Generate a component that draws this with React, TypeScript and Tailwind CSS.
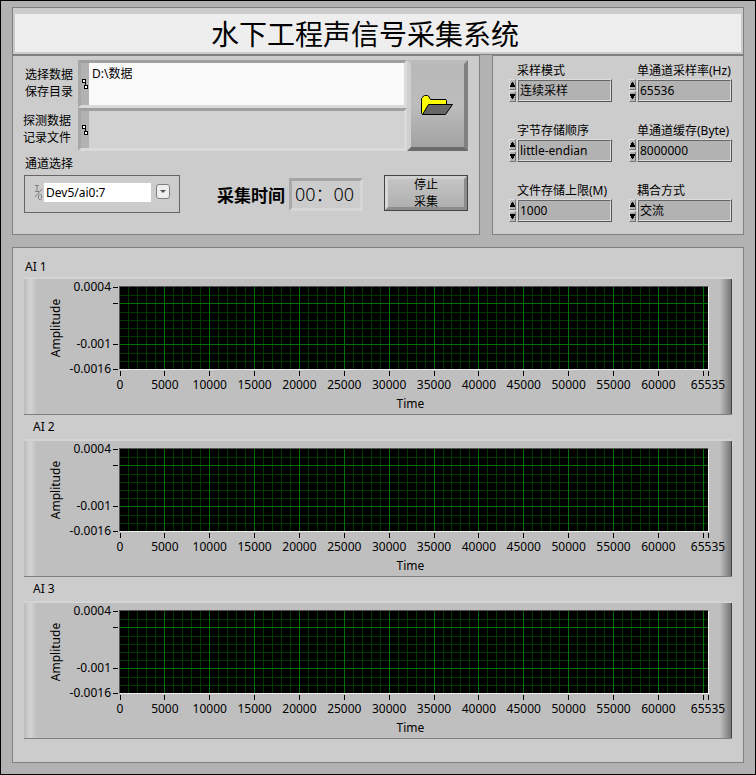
import React, { useId } from "react";

const PANEL = "border border-[#808080] bg-[#cccccc]";

function PathGlyph() {
  return (
    <svg width="8" height="12" viewBox="0 0 8 12" shapeRendering="crispEdges" aria-hidden="true">
      <path d="M1.5 1.5h3v3h-3z M3.5 7.5h3v3h-3z" fill="#fff" stroke="#000" />
      <path d="M4.500 4v4" stroke="#000" />
    </svg>
  );
}

function PathField(props: {
  lines: [string, string];
  value: string;
  labelClass: string;
  rowClass: string;
  fieldClass: string;
}) {
  const id = useId();
  return (
    <div className={"flex " + props.rowClass}>
      <label htmlFor={id} className={"w-[65px] shrink-0 leading-[17px] " + props.labelClass}>
        {props.lines[0]}
        <br />
        {props.lines[1]}
      </label>
      <div className="flex min-w-0 flex-1 border-[3px] border-t-[#a0a0a0] border-r-[#dadada] border-b-[#dadada] border-l-[#a8a8a8]">
        <div className="flex w-2 shrink-0 items-center bg-[#b2b2b2]">
          <PathGlyph />
        </div>
        <textarea
          id={id}
          defaultValue={props.value}
          className={"block min-w-0 flex-1 resize-none overflow-hidden px-[3px] pt-px leading-5 outline-none " + props.fieldClass}
        />
      </div>
    </div>
  );
}

function FolderIcon() {
  return (
    <svg width="33" height="21" viewBox="0 0 33 21" aria-hidden="true">
      <path d="M.5 18.5V3.5l1-1 1-1.5 1-.5h3l1 .5 1 2 1 1.500h15.500l.5 1V10H8L2 19.500z" fill="#ffff00" stroke="#000" />
      <path d="M7.500 9.500h24l-7 10h-23z" fill="#666" stroke="#000" />
    </svg>
  );
}

type Setting = { label: string; value: string; kind: "select" | "number" };

const SETTINGS: Setting[] = [
  { label: "采样模式", value: "连续采样", kind: "select" },
  { label: "单通道采样率(Hz)", value: "65536", kind: "number" },
  { label: "字节存储顺序", value: "little-endian", kind: "select" },
  { label: "单通道缓存(Byte)", value: "8000000", kind: "number" },
  { label: "文件存储上限(M)", value: "1000", kind: "number" },
  { label: "耦合方式", value: "交流", kind: "select" },
];

const STEP =
  "flex h-[11px] w-full items-center justify-center border border-t-[#dddddd] border-r-[#777777] border-b-[#777777] border-l-[#dddddd] bg-[#b2b2b2]";

function SettingField({ label, value, kind }: Setting) {
  const id = useId();
  const field =
    "block h-full w-full min-w-0 appearance-none border border-t-[#666666] border-r-[#dddddd] border-b-[#dddddd] border-l-[#666666] bg-[#b2b2b2] px-px leading-[18px] outline-none";
  return (
    <div>
      <label htmlFor={id} className="block h-[17px] pl-2 leading-[18px] whitespace-nowrap">
        {label}
      </label>
      <div className="flex h-[23px]">
        <div className="mr-px flex w-[7px] shrink-0 flex-col justify-between">
          <button type="button" className={STEP} aria-label={label + " +"}>
            <svg width="5" height="5" viewBox="0 0 5 5" shapeRendering="crispEdges" className="shrink-0" aria-hidden="true">
              <path d="M2 0h1v1h1v2h1v2H0V3h1V1h1z" />
            </svg>
          </button>
          <button type="button" className={STEP} aria-label={label + " -"}>
            <svg width="5" height="5" viewBox="0 0 5 5" shapeRendering="crispEdges" className="shrink-0" aria-hidden="true">
              <path d="M0 0h5v2H4v2H3v1H2V4H1V2H0z" />
            </svg>
          </button>
        </div>
        <div className="min-w-0 flex-1 border border-t-[#dddddd] border-r-[#555555] border-b-[#555555] border-l-[#dddddd]">
          {kind === "select" ? (
            <select id={id} className={field}>
              <option>{value}</option>
            </select>
          ) : (
            <input id={id} type="text" inputMode="numeric" defaultValue={value} className={field} />
          )}
        </div>
      </div>
    </div>
  );
}

const X_MAX = 65535;
const Y_MAX = 4;
const Y_SPAN = 20;
const PLOT_H = 82;
const X_LINES = Array.from({ length: 65 }, (_, i) => (i + 1) * 1000);
const Y_LINES = [2, 0, -2, -4, -6, -8, -10, -12, -14];
const X_TICKS = [0, 5000, 10000, 15000, 20000, 25000, 30000, 35000, 40000, 45000, 50000, 55000, 60000, 65000, 65535];
const Y_TICKS: { at: number; text: string }[] = [
  { at: 4, text: "0.0004" },
  { at: 0, text: "" },
  { at: -10, text: "-0.001" },
  { at: -16, text: "-0.0016" },
];

const xPos = (v: number) => (v / X_MAX) * 100 + "%";
const yPos = (v: number) => Math.round(((Y_MAX - v) / Y_SPAN) * PLOT_H) + 0.5;

function Plot() {
  const minorX = X_LINES.filter((v) => v % 5000 !== 0);
  const majorX = X_LINES.filter((v) => v % 5000 === 0);
  const minorY = Y_LINES.filter((v) => v % 10 !== 0);
  const majorY = Y_LINES.filter((v) => v % 10 === 0);
  const vLine = (v: number) => <line key={"x" + v} x1={xPos(v)} x2={xPos(v)} y1="0" y2="82" />;
  const hLine = (v: number) => <line key={"y" + v} x1="0" x2="100%" y1={yPos(v)} y2={yPos(v)} />;
  return (
    <svg width="100%" height="82" className="block overflow-visible text-xs" fill="#000">
      <rect width="100%" height="82" />
      <g shapeRendering="crispEdges">
        <g stroke="#003800">
          {minorX.map(vLine)}
          {minorY.map(hLine)}
        </g>
        <g stroke="#007000">
          {majorX.map(vLine)}
          {majorY.map(hLine)}
        </g>
        <g stroke="#000">
          {X_TICKS.map((v) => (
            <line key={v} x1={xPos(v)} x2={xPos(v)} y1="84" y2="89" />
          ))}
          {Y_TICKS.map((t) => (
            <line key={t.at} x1="-7" x2="-2" y1={yPos(t.at)} y2={yPos(t.at)} />
          ))}
        </g>
      </g>
      {X_TICKS.filter((v) => v !== 65000).map((v) => (
        <text key={v} x={xPos(v)} y="102" textAnchor="middle">
          {v}
        </text>
      ))}
      {Y_TICKS.map((t) => (
        <text key={t.at} x="-9" y={Math.floor(yPos(t.at)) + 4} textAnchor="end">
          {t.text}
        </text>
      ))}
      <text x="49.4%" y="121" textAnchor="middle">
        Time
      </text>
      <text transform="translate(-60 41) rotate(-90)" textAnchor="middle">
        Amplitude
      </text>
    </svg>
  );
}

function Chart({ name, headClass }: { name: string; headClass: string }) {
  return (
    <section>
      <h2 className={"flex h-6 leading-5 " + headClass}>{name}</h2>
      <div className="flex h-[138px] border-t-2 border-b border-t-[#d4d4d4] border-b-[#808080] bg-[#bfbfbf]">
        <div className="w-3 shrink-0 bg-linear-to-r from-[#bcbcbc] via-[#d4d4d4] to-[#c2c2c2]" />
        <div className="z-10 min-w-0 flex-1 pt-[7px] pr-[11px] pl-[83px]">
          <div className="border border-t-[#555555] border-r-[#eeeeee] border-b-[#eeeeee] border-l-[#555555]">
            <Plot />
          </div>
        </div>
        <div className="w-3 shrink-0 border-r border-[#444444] bg-linear-to-r from-[#bfbfbf] to-[#777777]" />
      </div>
    </section>
  );
}

export default function App() {
  return (
    <main className="min-h-screen border border-black bg-[#b2b2b2] px-[11px] pt-[6px] pb-[11px] font-['Noto_Sans','Noto_Sans_CJK_SC',sans-serif] text-xs text-black">
      <header className={"px-[2px] pt-[6px] pb-[2px] " + PANEL}>
        <h1 className="bg-[#eeeeee] pr-[26px] text-center font-['Noto_Sans_CJK_SC',sans-serif] text-[28px] leading-[38px]">
          水下工程声信号采集系统
        </h1>
      </header>

      <div className="grid grid-cols-[minmax(0,468fr)_minmax(0,252fr)] gap-3">
        <section className={"h-[180px] pt-1 pr-[11px] " + PANEL}>
          <div className="flex">
            <div className="min-w-0 flex-1">
              <PathField
                lines={["选择数据", "保存目录"]}
                value="D:\数据"
                rowClass="h-12"
                labelClass="pt-[6px] pl-3"
                fieldClass="bg-[#fafafa]"
              />
              <PathField
                lines={["探测数据", "记录文件"]}
                value=""
                rowClass="h-[43px]"
                labelClass="pt-1 pl-[10px]"
                fieldClass="bg-[#d2d2d2]"
              />
            </div>
            <button
              type="button"
              aria-label="选择目录"
              className="flex w-[61px] shrink-0 items-center justify-center border-4 border-t-[#bcbcbc] border-r-[#808080] border-b-[#6c6c6c] border-l-[#cfcfcf] bg-linear-to-b from-[#b8b8b8] via-[#bcbcbc] to-[#a2a2a2]"
            >
              <FolderIcon />
            </button>
          </div>

          <div className="h-6 pl-3 leading-[26px]">
            <label htmlFor="channel">通道选择</label>
          </div>

          <div className="flex items-start gap-[21px] pl-[11px]">
            <div className="flex h-[38px] w-[156px] shrink-0 items-start border border-[#666666] pt-[7px] pl-[9px]">
              <svg width="10" height="19" viewBox="0 0 10 19" fill="none" stroke="#808080" className="shrink-0" aria-hidden="true">
                <path d="M1 2.500h4M3 2.500v6M1 8.500h4M8 6L1 14" />
                <rect x="4.500" y="11.500" width="3" height="5" rx="1" />
              </svg>
              <select id="channel" className="h-[19px] w-[107px] appearance-none bg-white px-[2px] leading-[19px] outline-none">
                <option>Dev5/ai0:7</option>
              </select>
              <button
                type="button"
                aria-label="展开通道列表"
                className="mt-px ml-[5px] flex h-[15px] w-[14px] items-center justify-center rounded-[3px] border border-[#808080] bg-[#eeeeee]"
              >
                <svg width="6" height="3" viewBox="0 0 6 3" aria-hidden="true">
                  <path d="M0 0h6L3 3z" fill="#555" />
                </svg>
              </button>
            </div>
            <div className="ml-auto flex items-center gap-1 pt-[3px]">
              <label htmlFor="elapsed" className="text-[17px] leading-9 font-bold whitespace-nowrap">
                采集时间
              </label>
              <input
                id="elapsed"
                readOnly
                value="00：00"
                className="h-[33px] w-[74px] self-start border-[3px] border-t-[#a4a4a4] border-r-[#d6d6d6] border-b-[#d6d6d6] border-l-[#a8a8a8] bg-[#cccccc] px-[3px] pb-[3px] text-lg leading-6 font-light outline-none"
              />
            </div>
            <button
              type="button"
              className="h-9 w-[84px] shrink-0 border border-[#444444] bg-[#bcbcbc] leading-[17px]"
            >
              <span className="flex h-full items-center justify-center border-[3px] border-t-[#d0d0d0] border-r-[#8c8c8c] border-b-[#8c8c8c] border-l-[#d8d8d8] bg-linear-to-b from-[#c4c4c4] to-[#b0b0b0]">
                停止
                <br />
                采集
              </span>
            </button>
          </div>
        </section>

        <section className={"grid h-[180px] grid-cols-2 content-start gap-x-[17px] gap-y-5 pt-[6px] pr-[11px] pl-4 " + PANEL}>
          {SETTINGS.map((s) => (
            <SettingField key={s.label} {...s} />
          ))}
        </section>
      </div>

      <section className={"mt-3 px-[11px] pt-[5px] pb-[23px] " + PANEL}>
        <Chart name="AI 1" headClass="items-end pl-px" />
        <Chart name="AI 2" headClass="items-center pl-[9px]" />
        <Chart name="AI 3" headClass="items-center pl-[9px]" />
      </section>
    </main>
  );
}
